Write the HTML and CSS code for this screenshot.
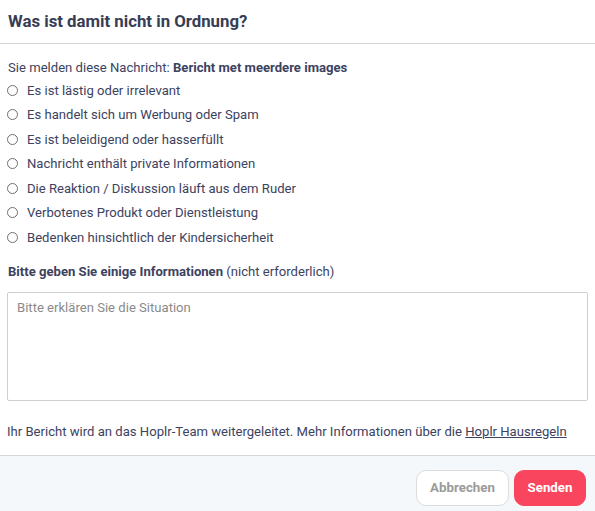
FILE: index.html
```html
<!DOCTYPE html>
<html lang="de">
<head>
<meta charset="utf-8">
<link rel="stylesheet" href="styles.css">
</head>
<body>
<div class="modal">
  <div class="header"><h1 class="title">Was ist damit nicht in Ordnung?</h1></div>
  <div class="content">
    <p class="intro">Sie melden diese Nachricht: <b>Bericht met meerdere images</b></p>
    <ul class="options">
      <li><label><input type="radio" name="r"><span>Es ist lästig oder irrelevant</span></label></li>
      <li><label><input type="radio" name="r"><span>Es handelt sich um Werbung oder Spam</span></label></li>
      <li><label><input type="radio" name="r"><span>Es ist beleidigend oder hasserfüllt</span></label></li>
      <li><label><input type="radio" name="r"><span>Nachricht enthält private Informationen</span></label></li>
      <li><label><input type="radio" name="r"><span>Die Reaktion / Diskussion läuft aus dem Ruder</span></label></li>
      <li><label><input type="radio" name="r"><span>Verbotenes Produkt oder Dienstleistung</span></label></li>
      <li><label><input type="radio" name="r"><span>Bedenken hinsichtlich der Kindersicherheit</span></label></li>
    </ul>
    <p class="info-label"><b>Bitte geben Sie einige Informationen</b> (nicht erforderlich)</p>
    <textarea class="text" placeholder="Bitte erklären Sie die Situation"></textarea>
    <p class="note">Ihr Bericht wird an das Hoplr-Team weitergeleitet. Mehr Informationen über die <a href="#">Hoplr Hausregeln</a></p>
  </div>
  <div class="footer">
    <button class="btn cancel">Abbrechen</button>
    <button class="btn send">Senden</button>
  </div>
</div>
</body>
</html>
```
FILE: styles.css
```css
* { box-sizing: border-box; }
html, body { margin: 0; padding: 0; background: #fff; }
body {
  font-family: Roboto, "Liberation Sans", Arial, sans-serif;
  color: #3c4260;
  font-size: 13.1px;
}
.modal { width: 595px; }
.header {
  padding: 11px 8px 11px;
  border-bottom: 1px solid #d6d6d6;
}
.title {
  margin: 0;
  font-size: 16.8px;
  line-height: 21px;
  font-weight: 700;
  color: #383d56;
}
.content { padding: 16px 7px 0 7px; }
.intro { margin: 0 0 0 1px; line-height: 16px; }
.intro b { font-weight: 700; }
.options { list-style: none; margin: 2px 0 0; padding: 0; }
.options li { height: 24.5px; display: flex; align-items: center; }
.options label { display: flex; align-items: center; gap: 9px; }
.options input {
  appearance: none;
  -webkit-appearance: none;
  margin: 0;
  width: 11px;
  height: 11px;
  border: 1px solid #6f6f6f;
  border-radius: 50%;
  background: #fff;
}
.info-label { margin: 14px 0 0 1px; line-height: 16px; }
.info-label b { font-weight: 700; }
.text {
  display: block;
  margin-top: 12px;
  width: 581px;
  height: 109px;
  border: 1px solid #cfcfcf;
  border-radius: 2px;
  padding: 7px 9px;
  font-family: inherit;
  font-size: 13.1px;
  resize: none;
  color: #3c4260;
}
.text::placeholder { color: #8a8a8a; }
.note { margin: 23px 0 0 0; line-height: 16px; padding-bottom: 15px; }
.note a { color: #3c4260; text-decoration: underline; }
.footer {
  border-top: 1px solid #d6d6d6;
  background: #f5f8fb;
  display: flex;
  justify-content: flex-end;
  gap: 5px;
  padding: 14px 9px 14px;
}
.btn {
  height: 36px;
  border-radius: 10px;
  font-family: inherit;
  font-size: 13.3px;
  font-weight: 700;
  padding: 0 10px;
}
.cancel {
  background: #fff;
  border: 1px solid #dcdcdc;
  color: #9a9a9a;
  width: 93px;
}
.send {
  background: #fa455e;
  border: 1px solid #fa455e;
  color: #fff;
  width: 72px;
}
```
